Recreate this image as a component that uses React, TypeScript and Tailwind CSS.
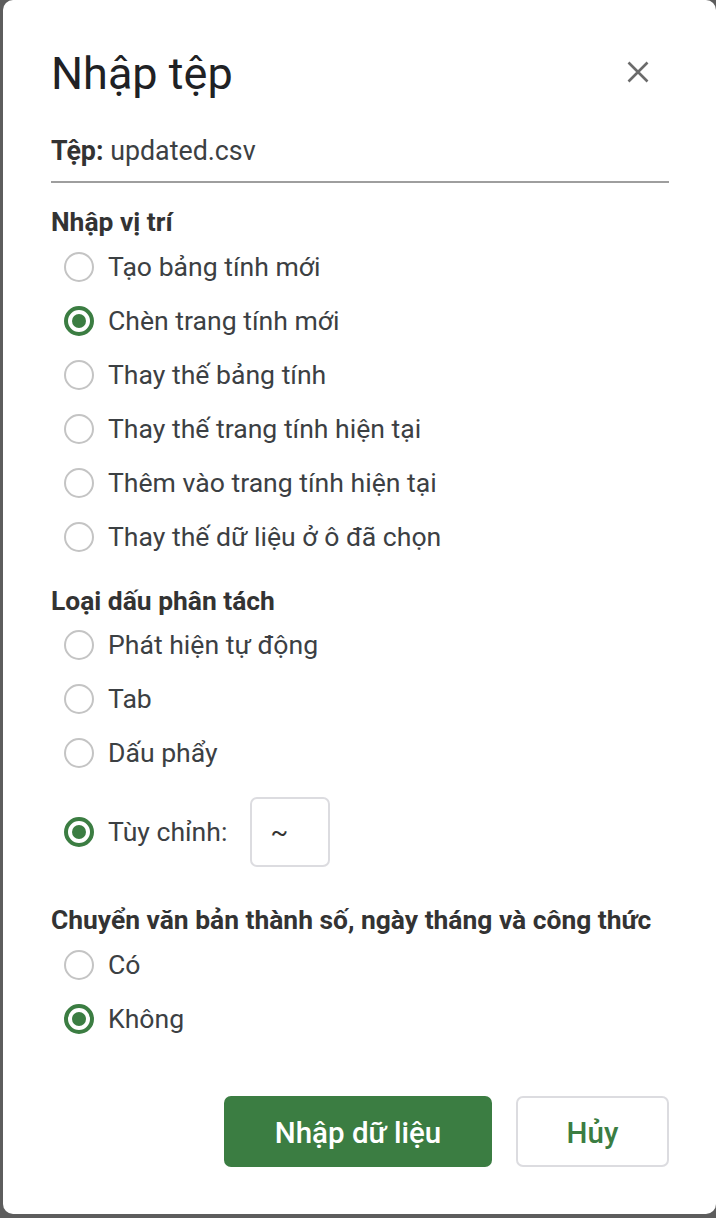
import React, { useState } from 'react';

type Option = { id: string; label: string };

const locationOptions: Option[] = [
  { id: 'new-spreadsheet', label: 'Tạo bảng tính mới' },
  { id: 'insert-sheet', label: 'Chèn trang tính mới' },
  { id: 'replace-spreadsheet', label: 'Thay thế bảng tính' },
  { id: 'replace-sheet', label: 'Thay thế trang tính hiện tại' },
  { id: 'append-sheet', label: 'Thêm vào trang tính hiện tại' },
  { id: 'replace-selection', label: 'Thay thế dữ liệu ở ô đã chọn' },
];

const separatorOptions: Option[] = [
  { id: 'auto', label: 'Phát hiện tự động' },
  { id: 'tab', label: 'Tab' },
  { id: 'comma', label: 'Dấu phẩy' },
];

const convertOptions: Option[] = [
  { id: 'yes', label: 'Có' },
  { id: 'no', label: 'Không' },
];

const RadioDot: React.FC<{ checked: boolean }> = ({ checked }) =>
  checked ? (
    <span className="flex h-[30px] w-[30px] shrink-0 items-center justify-center rounded-full border-[4px] border-[#3b7d42] bg-white">
      <span className="h-[14px] w-[14px] rounded-full bg-[#3b7d42]" />
    </span>
  ) : (
    <span className="h-[30px] w-[30px] shrink-0 rounded-full border-2 border-[#c4c4c4] bg-white" />
  );

const RadioRow: React.FC<{ label: string; checked: boolean; onSelect: () => void; children?: React.ReactNode; tall?: boolean }> = ({
  label,
  checked,
  onSelect,
  children,
  tall,
}) => (
  <div
    className={`flex cursor-pointer items-center pl-[13px] ${tall ? 'h-[104px]' : 'h-[54px]'}`}
    onClick={onSelect}
  >
    <RadioDot checked={checked} />
    <span className="ml-[14px] text-[26.6px] leading-[32px] text-[#3c4043]">{label}</span>
    {children}
  </div>
);

const SectionTitle: React.FC<{ children: React.ReactNode; className?: string }> = ({ children, className }) => (
  <div className={`text-[26.4px] font-bold leading-[32px] text-[#333333] ${className ?? ''}`}>{children}</div>
);

export default function App() {
  const [location, setLocation] = useState('insert-sheet');
  const [separator, setSeparator] = useState('custom');
  const [convert, setConvert] = useState('no');

  return (
    <div className="h-[1218px] w-[716px] overflow-hidden bg-[#5d5d5d] font-['Roboto','Noto_Sans',sans-serif]">
      <div className="ml-[3px] h-[1214px] w-[713px] rounded-[10px] bg-white pl-[48px] pr-[47px] pt-[46px]">
        {/* header */}
        <div className="flex h-[56px] items-start justify-between">
          <h1 className="text-[45px] font-normal leading-[56px] text-[#202124]">Nhập tệp</h1>
          <button className="mr-[20px] mt-[15px] flex h-[22px] w-[22px] items-center justify-center" aria-label="Đóng">
            <svg width="22" height="22" viewBox="0 0 22 22" fill="none">
              <path d="M1.5 1.5L20.5 20.5M20.5 1.5L1.5 20.5" stroke="#6b6b6b" strokeWidth="2.6" />
            </svg>
          </button>
        </div>

        {/* file */}
        <div className="border-b-2 border-[#9e9e9e] pb-[14px] pt-[33px] text-[26.8px] leading-[32px] text-[#3c4043]">
          <span className="font-bold text-[#333333]">Tệp:</span> updated.csv
        </div>

        {/* import location */}
        <SectionTitle className="pt-[23px]">Nhập vị trí</SectionTitle>
        <div className="mt-[2px]">
          {locationOptions.map((o) => (
            <RadioRow key={o.id} label={o.label} checked={location === o.id} onSelect={() => setLocation(o.id)} />
          ))}
        </div>

        {/* separator type */}
        <SectionTitle className="pt-[21px]">Loại dấu phân tách</SectionTitle>
        <div className="mt-[1px]">
          {separatorOptions.map((o) => (
            <RadioRow key={o.id} label={o.label} checked={separator === o.id} onSelect={() => setSeparator(o.id)} />
          ))}
          <RadioRow label="Tùy chỉnh:" checked={separator === 'custom'} onSelect={() => setSeparator('custom')} tall>
            <div className="ml-[23px] flex h-[70px] w-[80px] items-center rounded-[7px] border-2 border-[#dcdce0] pl-[18px] text-[26px] text-[#333333]">
              ~
            </div>
          </RadioRow>
        </div>

        {/* convert */}
        <SectionTitle className="pt-[20px]">Chuyển văn bản thành số, ngày tháng và công thức</SectionTitle>
        <div className="mt-[2px]">
          {convertOptions.map((o) => (
            <RadioRow key={o.id} label={o.label} checked={convert === o.id} onSelect={() => setConvert(o.id)} />
          ))}
        </div>

        {/* actions */}
        <div className="mt-[50px] flex justify-end gap-[24px]">
          <button className="h-[71px] w-[268px] rounded-[7px] bg-[#3b7d42] pt-[3px] text-[29.5px] font-medium text-white">
            Nhập dữ liệu
          </button>
          <button className="h-[71px] w-[153px] rounded-[7px] border-2 border-[#dcdce0] bg-white pt-[3px] text-[29.5px] font-medium text-[#3b7d42]">
            Hủy
          </button>
        </div>
      </div>
    </div>
  );
}
